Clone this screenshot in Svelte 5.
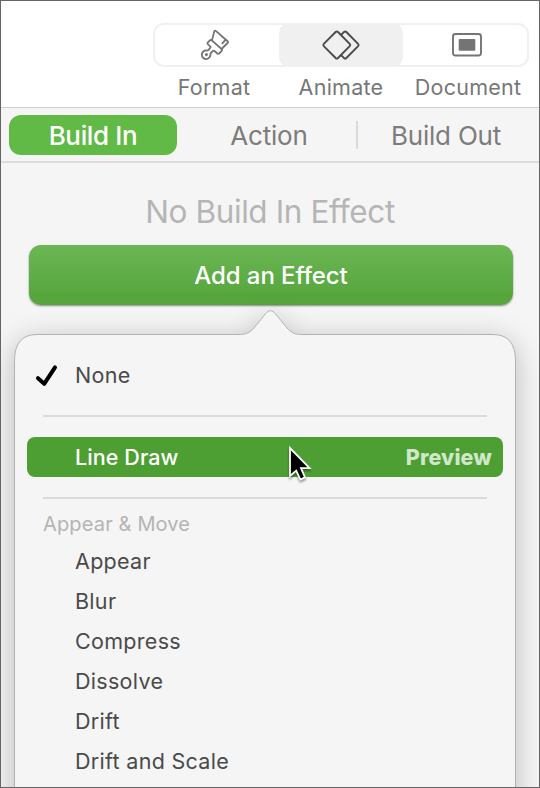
<script lang="ts">
  const tabs = ["Build In", "Action", "Build Out"];
  const effects = ["Appear", "Blur", "Compress", "Dissolve", "Drift", "Drift and Scale"];

  let activeTab = $state("Build In");
</script>

<div class="inspector">
  <header class="toolbar">
    <div class="segments">
      <button class="segment" aria-label="Format">
        <svg width="30" height="32" viewBox="0 0 30 32" fill="none" stroke="#747474" stroke-width="1.8" stroke-linejoin="round" stroke-linecap="round">
          <path d="M11 11.4 L13.2 2.6 Q13.8 1 15.1 2.1 L26.6 12.2 Q27.6 13.1 26.6 14 L20.6 20" />
          <path d="M24.6 10.6 L21.4 14.4" />
          <path d="M20.6 20 L10.8 11.3 Q9.6 10.6 8.6 11.6 L6.9 13.3 Q6 14.3 7 15.3 L9.2 17.3 Q9.9 18.2 9 19.2 L7.6 20.8 Q6.9 21.5 5.6 21.5 A4.3 4.3 0 1 0 9.4 25.9 Q9.4 24.6 10.2 23.7 L11.6 22.1 Q12.5 21.2 13.5 22 L16.4 24.5 Q17.4 25.3 18.2 24.4 L20.6 21.9 Q21.4 20.9 20.6 20" />
          <circle cx="5.4" cy="25.5" r="0.6" fill="#747474" />
        </svg>
      </button>
      <button class="segment selected" aria-label="Animate">
        <svg width="40" height="32" viewBox="0 0 40 32" fill="none" stroke="#4b4b4b" stroke-width="1.9" stroke-linejoin="round">
          <path d="M14.6 3 Q15.8 1.9 17 3 L28.7 14.8 Q29.8 16 28.7 17.2 L17 29 Q15.8 30.1 14.6 29 L2.8 17.2 Q1.7 16 2.8 14.8 Z" />
          <path d="M20.3 5.7 L23 3 Q24.2 1.9 25.4 3 L37.1 14.8 Q38.2 16 37.1 17.2 L25.4 29 Q24.2 30.1 23 29 L20.3 26.3" />
        </svg>
      </button>
      <button class="segment document" aria-label="Document">
        <svg width="32" height="26" viewBox="0 0 32 26">
          <rect x="2" y="2" width="28" height="21.5" rx="2.5" fill="none" stroke="#747474" stroke-width="1.9" />
          <rect x="7.7" y="6.9" width="16.6" height="11.8" rx="1" fill="#747474" />
        </svg>
      </button>
    </div>
    <div class="labels">
      <span>Format</span>
      <span>Animate</span>
      <span>Document</span>
    </div>
  </header>

  <nav class="tabs">
    {#each tabs as tab}
      <button class="tab" class:active={tab === activeTab} onclick={() => (activeTab = tab)}>{tab}</button>
    {/each}
  </nav>

  <main class="content">
    <h1>No Build In Effect</h1>
    <button class="add">Add an Effect</button>

    <div class="popover">
      <svg class="bubble" width="540" height="560" viewBox="0 0 540 560">
        <path d="M14.5 600 V61 Q14.5 34.5 37 34.5 H239 C246 34.5 250 32.5 254 28 L265.5 13.8 Q270.5 7.5 275.5 13.8 L287 28 C291 32.5 295 34.5 302 34.5 H493 Q515.5 34.5 515.5 61 V600 Z" />
      </svg>
      <ul class="menu">
        <li class="item">
          <svg class="check" width="24" height="24" viewBox="0 0 24 24" fill="none" stroke="#000" stroke-width="4" stroke-linecap="round" stroke-linejoin="round">
            <path d="M3 14.2 L9.2 19.8 L20 3.4" />
          </svg>
          None
        </li>
        <li class="separator"></li>
        <li class="item highlighted">
          Line Draw
          <span class="preview">Preview</span>
          <svg class="cursor" width="28" height="40" viewBox="0 0 28 40">
            <path d="M3 4 V32 L9.2 26.6 L13.4 35.6 L18 33.4 L14 24.2 H22.6 Z" fill="#000" stroke="#fff" stroke-width="1.8" />
          </svg>
        </li>
        <li class="separator"></li>
        <li class="group">Appear &amp; Move</li>
        {#each effects as effect}
          <li class="item">{effect}</li>
        {/each}
      </ul>
    </div>
  </main>
</div>

<style>
  :global(body) {
    margin: 0;
  }

  .inspector {
    box-sizing: border-box;
    position: relative;
    width: 540px;
    height: 788px;
    border: 1px solid #666465;
    background: #f5f5f5;
    overflow: hidden;
    font-family: Inter, "Liberation Sans", sans-serif;
    color: #4a4a4a;
  }

  button {
    border: 0;
    padding: 0;
    background: none;
    font: inherit;
    letter-spacing: inherit;
    color: inherit;
  }

  .toolbar {
    box-sizing: border-box;
    height: 107px;
    padding: 22px 10px 0 152px;
    border-bottom: 1px solid #cecece;
    background: #fff;
  }

  .segments {
    box-sizing: border-box;
    height: 44px;
    display: grid;
    grid-template-columns: 126px 124px 126px;
    border-radius: 11px;
    box-shadow: inset 0 0 0 2px #f0f0f0;
  }

  .segment {
    display: flex;
    align-items: center;
    justify-content: center;
  }

  .segment.selected {
    border-radius: 10px;
    background: #f0f0f0;
  }

  .segment.document {
    padding-left: 2px;
  }

  .labels {
    display: grid;
    grid-template-columns: 122px 132px 122px;
    margin-top: 5px;
    font-size: 21.5px;
    line-height: 30px;
    letter-spacing: 0.25px;
    text-align: center;
    color: #777;
  }

  .tabs {
    box-sizing: border-box;
    height: 55px;
    padding: 7px 8px 6px;
    border-bottom: 2px solid #dcdcdc;
    display: grid;
    grid-template-columns: 168px 180px 1fr;
    font-size: 26px;
    letter-spacing: -0.2px;
    color: #7c7c7c;
  }

  .tab {
    position: relative;
    height: 40px;
    padding-left: 4px;
    border-radius: 12px;
  }

  .tab.active {
    padding-left: 0;
    background: #61ba46;
    color: #fff;
    font-weight: 500;
    letter-spacing: -0.35px;
  }

  .tab:last-child::before {
    content: "";
    position: absolute;
    left: -1px;
    top: 6px;
    width: 2px;
    height: 28px;
    background: #dadada;
  }

  h1 {
    margin: 0;
    padding-top: 27px;
    font-size: 31.5px;
    font-weight: 400;
    line-height: 44px;
    letter-spacing: -0.4px;
    text-align: center;
    color: #b5b5b5;
  }

  .add {
    display: block;
    width: 484px;
    height: 60px;
    margin: 11px 0 0 28px;
    border-radius: 12px;
    background: linear-gradient(#6bb755, #57a63d 85%);
    box-shadow: 0 1px 2px rgba(60, 40, 60, 0.55);
    font-size: 24px;
    font-weight: 500;
    letter-spacing: -0.1px;
    color: #fff;
  }

  /* The popover hangs over the inspector and runs past its bottom edge. */
  .popover {
    position: absolute;
    left: -1px;
    top: 299px;
    width: 540px;
  }

  .bubble {
    position: absolute;
    inset: 0;
    fill: #f5f5f5;
    stroke: #b2b2b2;
    overflow: visible;
    filter: drop-shadow(0 6px 14px rgba(0, 0, 0, 0.24));
  }

  .menu {
    position: relative;
    margin: 0;
    padding: 55px 37px 0 27px;
    list-style: none;
    font-size: 21.5px;
    letter-spacing: 0.3px;
  }

  .item {
    position: relative;
    height: 40px;
    padding: 0 11px 0 48px;
    display: flex;
    align-items: center;
    justify-content: space-between;
  }

  .check {
    position: absolute;
    left: 8px;
    top: 9px;
  }

  .separator {
    height: 2px;
    margin: 20px 16px;
    background: #dadada;
  }

  .highlighted {
    border-radius: 8px;
    background: #4d9f33;
    color: #fff;
    font-weight: 500;
    letter-spacing: 0.1px;
  }

  .preview {
    font-weight: 800;
    color: #d0e7c9;
  }

  .cursor {
    position: absolute;
    left: 260px;
    top: 7px;
    filter: drop-shadow(0 2px 1px rgba(0, 0, 0, 0.4));
  }

  .group {
    height: 36px;
    margin-top: -14px;
    padding-left: 16px;
    font-size: 20px;
    line-height: 38px;
    letter-spacing: 0.15px;
    color: #b4b4b4;
  }
</style>
